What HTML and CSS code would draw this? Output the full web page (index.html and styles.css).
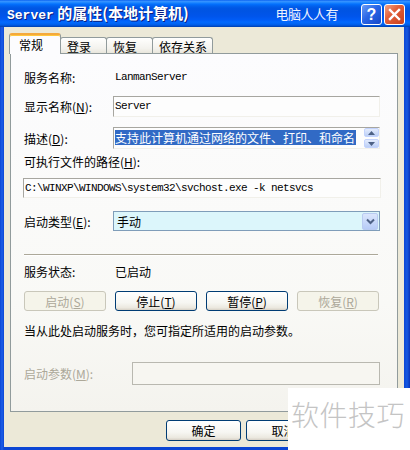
FILE: index.html
```html
<!DOCTYPE html>
<html lang="zh-CN">
<head>
<meta charset="utf-8">
<title>Server 的属性</title>
<link rel="stylesheet" href="styles.css">
</head>
<body>
<div class="window">
  <div class="titlebar">
    <div class="title"><span class="mono">Server</span> 的属性(本地计算机)</div>
    <div class="brand">电脑人人有</div>
    <div class="tbtn help">?</div>
    <div class="tbtn close">
      <svg width="13" height="13" viewBox="0 0 13 13"><path d="M2 2 L11 11 M11 2 L2 11" stroke="#fff" stroke-width="2.4" stroke-linecap="square"/></svg>
    </div>
  </div>
  <div class="frame">
    <div class="tabs">
      <div class="tab selected">常规</div>
      <div class="tab w46">登录</div>
      <div class="tab w46">恢复</div>
      <div class="tab w60">依存关系</div>
    </div>
    <div class="panel">
      <div class="row r1">
        <div class="label">服务名称:</div>
        <div class="value mono">LanmanServer</div>
      </div>
      <div class="row r2">
        <div class="label">显示名称(<u>N</u>):</div>
        <div class="box"><span class="mono">Server</span></div>
      </div>
      <div class="row r3">
        <div class="label">描述(<u>D</u>):</div>
        <div class="box desc">
          <span class="sel">支持此计算机通过网络的文件、打印、和命名</span>
          <div class="spin">
            <div class="arrow"><svg width="7" height="4" viewBox="0 0 7 4"><path d="M0 4 L3.5 0 L7 4 Z" fill="#4d6185"/></svg></div>
            <div class="arrow"><svg width="7" height="4" viewBox="0 0 7 4"><path d="M0 0 L3.5 4 L7 0 Z" fill="#4d6185"/></svg></div>
          </div>
        </div>
      </div>
      <div class="line r4">可执行文件的路径(<u>H</u>):</div>
      <div class="pathbox r5"><span class="mono">C:\WINXP\WINDOWS\system32\svchost.exe -k netsvcs</span></div>
      <div class="row r6">
        <div class="label">启动类型(<u>E</u>):</div>
        <div class="select">
          <span>手动</span>
          <div class="drop"><svg width="9" height="7" viewBox="0 0 9 7"><path d="M1 1.5 L4.5 5 L8 1.5" fill="none" stroke="#4d6185" stroke-width="2"/></svg></div>
        </div>
      </div>
      <div class="sep"></div>
      <div class="row r7">
        <div class="label">服务状态:</div>
        <div class="value">已启动</div>
      </div>
      <div class="btnrow r8">
        <div class="btn disabled">启动(<u>S</u>)</div>
        <div class="btn">停止(<u>T</u>)</div>
        <div class="btn">暂停(<u>P</u>)</div>
        <div class="btn disabled">恢复(<u>R</u>)</div>
      </div>
      <div class="line r9">当从此处启动服务时，您可指定所适用的启动参数。</div>
      <div class="paramrow r10">
        <div class="plabel">启动参数(<u>M</u>):</div>
        <div class="pbox"></div>
      </div>
    </div>
    <div class="footer">
      <div class="btn wide">确定</div>
      <div class="btn wide">取消</div>
    </div>
  </div>
  <div class="watermark">软件技巧</div>
</div>
</body>
</html>
```

FILE: styles.css
```css
html, body {
  margin: 0;
  padding: 0;
}
body {
  width: 410px;
  height: 450px;
  overflow: hidden;
  font-family: "Noto Sans CJK SC", "Liberation Sans", sans-serif;
  font-size: 12px;
  color: #000;
}
.window {
  position: relative;
  width: 410px;
  height: 450px;
  display: flex;
  flex-direction: column;
  background: linear-gradient(90deg, #0b46d4 0, #1c5ee8 2px, #0b46d4 4px, #0b46d4 calc(100% - 6px), #1458e2 calc(100% - 3px), #0733b8 100%);
}
.titlebar {
  height: 27px;
  flex: none;
  display: flex;
  align-items: center;
  padding: 0 5px 0 7px;
  color: #fff;
  background: linear-gradient(180deg, #0058ee 0, #3a93ff 4%, #288eff 8%, #127dff 12%, #036ffc 16%, #0262ee 22%, #0057e5 30%, #0054e3 40%, #0055eb 60%, #005bf5 72%, #026afe 82%, #0062ef 90%, #0052d6 95%, #0040ab 100%);
}
.title {
  font-weight: bold;
  font-size: 15px;
  line-height: 20px;
  text-shadow: 1px 1px 0 #0a1e80;
  margin-top: 1px;
}
.mono {
  font-family: "Liberation Mono", "DejaVu Sans Mono", monospace;
}
.title .mono {
  font-size: 13px;
}
.brand {
  margin-left: auto;
  margin-right: 21px;
  font-size: 13px;
  color: #eef3ff;
  letter-spacing: -0.5px;
}
.tbtn {
  width: 21px;
  height: 21px;
  box-sizing: border-box;
  border: 1px solid #fff;
  border-radius: 3px;
  display: flex;
  align-items: center;
  justify-content: center;
  margin-left: 2px;
  margin-top: 2px;
}
.help {
  background: linear-gradient(135deg, #6a9cf6 0, #2a66e6 45%, #1647c8 100%);
  font-family: "Liberation Sans", sans-serif;
  font-weight: bold;
  font-size: 16px;
  color: #fff;
}
.close {
  background: linear-gradient(135deg, #f3a486 0, #e2603a 40%, #c9401c 100%);
}
.frame {
  flex: 1;
  display: flex;
  flex-direction: column;
  margin: 0 6px 3px 4px;
  background: #ece9d8;
}
.tabs {
  height: 20px;
  margin-top: 6px;
  padding-left: 5px;
  display: flex;
  align-items: flex-end;
  flex: none;
}
.tab {
  height: 16px;
  box-sizing: border-box;
  border: 1px solid #919b9c;
  border-bottom: none;
  border-radius: 3px 3px 0 0;
  background: linear-gradient(#fffffe, #f3f2ed 70%, #e8e6dc);
  padding-left: 6px;
  line-height: 17px;
  white-space: nowrap;
  margin-left: -1px;
}
.tab.selected {
  position: relative;
  z-index: 1;
  height: 21px;
  width: 52px;
  margin-bottom: -1px;
  margin-left: 0;
  padding-left: 9px;
  line-height: 20px;
  background: #fcfcfe;
  border-top: 2px solid #f4a93c;
  box-shadow: inset 0 1px 0 #ffc73c;
}
.w46 { width: 47px; }
.w60 { width: 61px; }
.panel {
  flex: none;
  margin-left: 6px;
  width: 388px;
  height: 359px;
  box-sizing: border-box;
  border: 1px solid #919b9c;
  background: linear-gradient(#fcfcfe, #f9f9f6 70%, #f4f3ee);
  padding: 0 17px 0 13px;
  display: flex;
  flex-direction: column;
}
.row {
  display: grid;
  grid-template-columns: 89px 1fr;
  align-items: center;
}
.label, .value, .line {
  white-space: nowrap;
}
.value {
  padding-left: 2px;
}
.value.mono {
  font-size: 11px;
  letter-spacing: -0.6px;
}
.box, .pathbox {
  height: 100%;
  box-sizing: border-box;
  border-top: 1px solid #a7a6a0;
  border-left: 1px solid #a7a6a0;
  border-right: 1px solid #f1f0ea;
  border-bottom: 1px solid #f1f0ea;
  background: #fdfdfd;
  padding: 0 0 0 1px;
  display: flex;
  align-items: flex-start;
}
.box .mono, .pathbox .mono {
  font-size: 11px;
  letter-spacing: -0.6px;
  line-height: 14px;
  margin-top: 2px;
}
.pathbox {
  margin-left: -1px;
  width: 358px;
  flex: none;
}
.panel .r1 { height: 20px; margin-top: 13px; }
.panel .r2 { height: 21px; margin-top: 9px; }
.panel .r3 { height: 22px; margin-top: 10px; }
.panel .r4 { height: 18px; margin-top: 4px; line-height: 18px; }
.panel .r5 { height: 20px; margin-top: 7px; }
.panel .r6 { height: 20px; margin-top: 13px; }
.panel .r7 { height: 20px; margin-top: 6px; }
.panel .r8 { height: 20px; margin-top: 10px; }
.panel .r9 { height: 18px; margin-top: 11px; line-height: 18px; }
.panel .r10 { height: 23px; margin-top: 22px; }
.desc {
  align-items: center;
  justify-content: space-between;
}
.sel {
  background: #316ac5;
  color: #fff;
  line-height: 15px;
  height: 15px;
  margin-top: -2px;
  padding-right: 1px;
  white-space: nowrap;
}
.spin {
  display: flex;
  flex-direction: column;
  gap: 2px;
  margin-right: 0;
}
.arrow {
  width: 15px;
  height: 9px;
  box-sizing: border-box;
  border: 1px solid #c3d3fd;
  border-radius: 2px;
  background: linear-gradient(#e4ecfd, #bccff6);
  display: flex;
  align-items: center;
  justify-content: center;
}
.select {
  height: 100%;
  box-sizing: border-box;
  border: 1px solid #7f9db9;
  background: #dcf6fb;
  display: flex;
  align-items: center;
  justify-content: space-between;
  padding: 0 1px 0 3px;
}
.drop {
  width: 16px;
  height: 17px;
  box-sizing: border-box;
  border: 1px solid #b9cbf1;
  border-radius: 2px;
  background: linear-gradient(#dbe6fd, #b6cbf6);
  display: flex;
  align-items: center;
  justify-content: center;
}
.sep {
  flex: none;
  height: 1px;
  margin-top: 23px;
  width: 354px;
  background: #aca899;
  box-shadow: 0 1px 0 #fff;
}
.btnrow {
  display: flex;
  gap: 9px;
}
.btn {
  width: 82px;
  height: 100%;
  box-sizing: border-box;
  border: 1px solid #003c74;
  border-radius: 3px;
  background: linear-gradient(#ffffff, #f6f6f2 60%, #ebe8df 88%, #d6d0c5);
  display: flex;
  align-items: center;
  justify-content: center;
  white-space: nowrap;
}
.btn.disabled {
  border-color: #c9c7ba;
  color: #aca899;
  background: #f5f4ea;
}
.paramrow {
  display: grid;
  grid-template-columns: 108px 1fr;
  align-items: center;
}
.plabel {
  color: #aca899;
  white-space: nowrap;
}
.pbox {
  height: 100%;
  box-sizing: border-box;
  border: 1px solid #b9b8b0;
  background: #f7f6f1;
}
.footer {
  flex: none;
  display: flex;
  justify-content: flex-end;
  gap: 5px;
  height: 21px;
  margin-top: 8px;
  padding-right: 83px;
}
.btn.wide {
  width: 75px;
}
.watermark {
  position: absolute;
  left: 288px;
  top: 388px;
  right: 0;
  bottom: 0;
  background: #fff;
  color: #c4c4c4;
  font-size: 28px;
  font-weight: 300;
  line-height: 34px;
  padding: 9px 0 0 3px;
  letter-spacing: 0.5px;
  white-space: nowrap;
}
```
